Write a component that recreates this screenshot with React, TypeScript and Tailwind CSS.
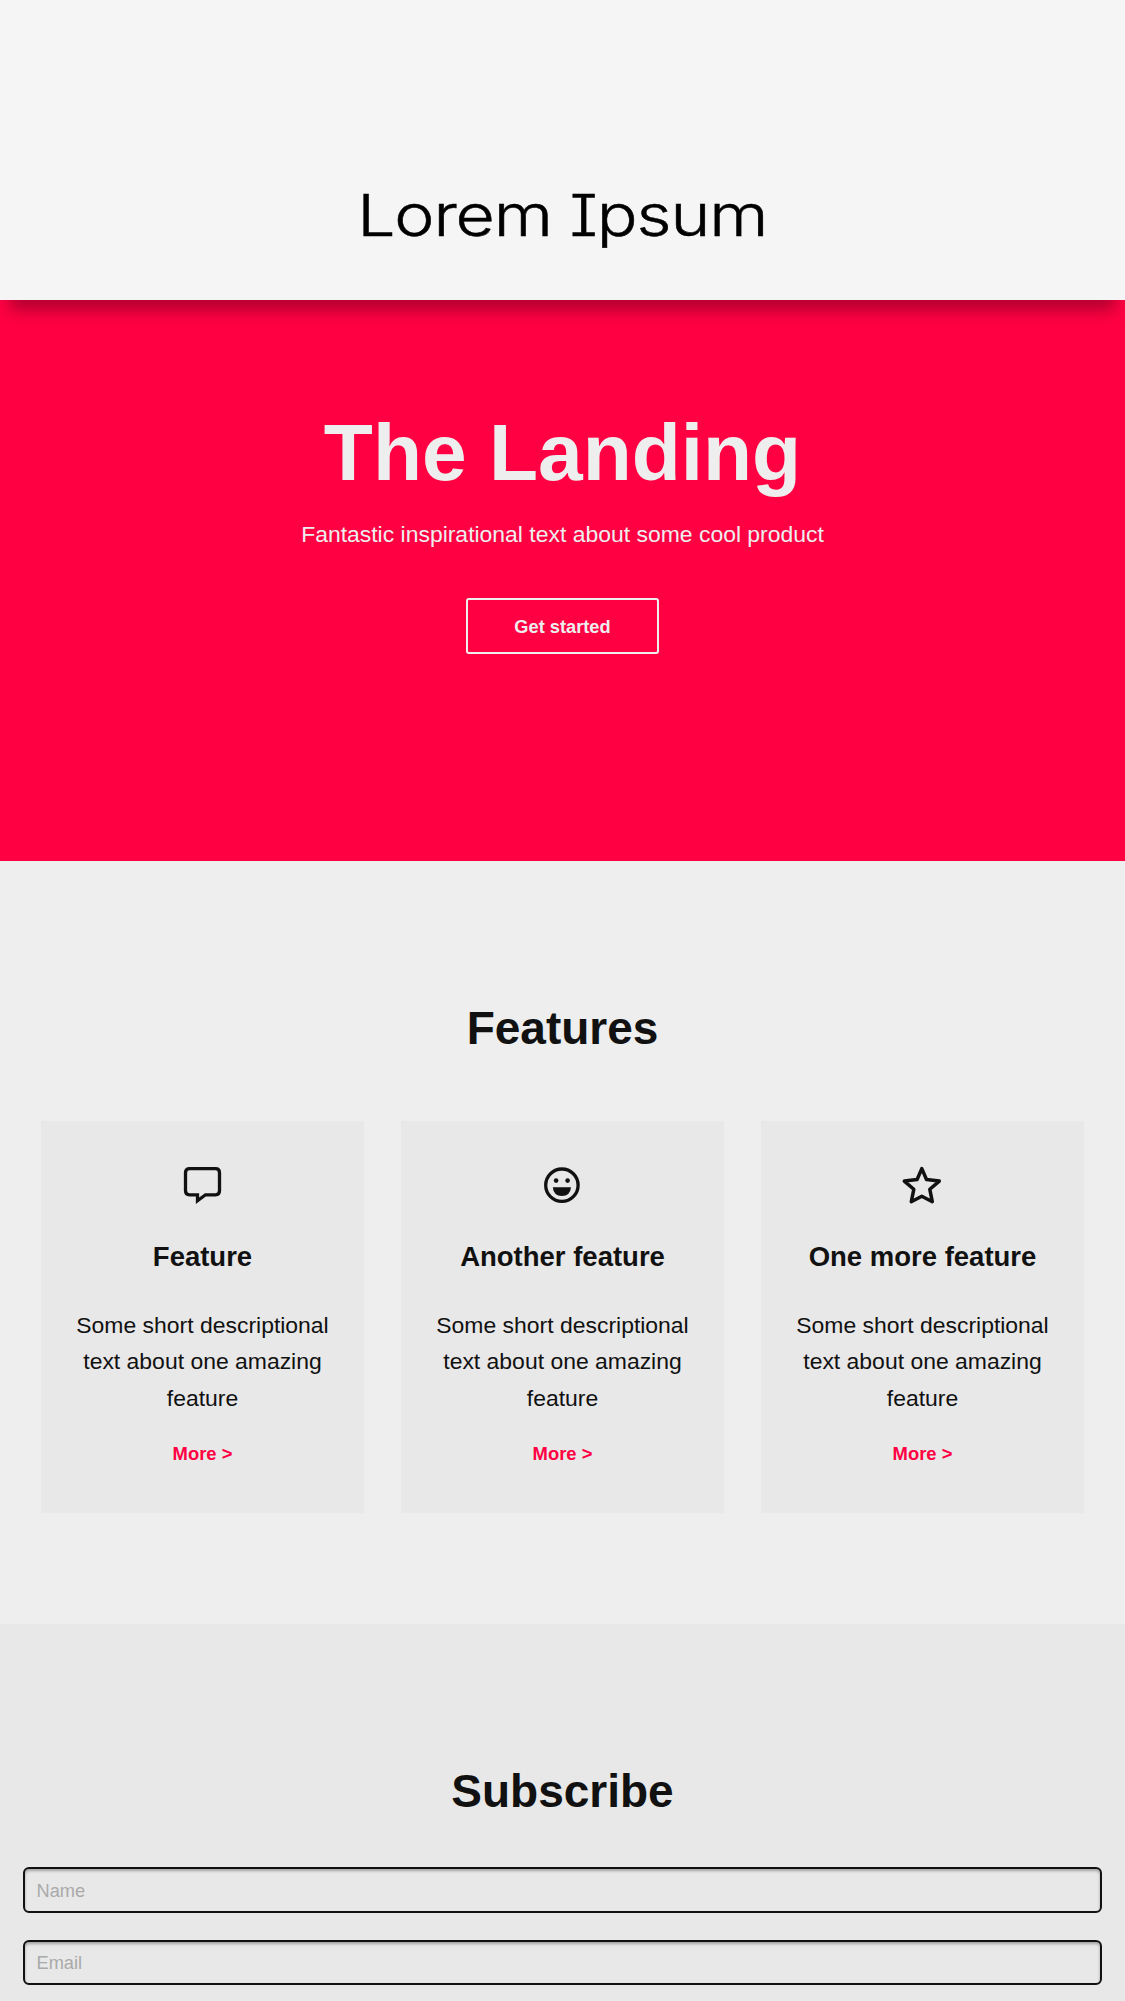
import type { ReactNode } from "react";

const CommentIcon = () => (
  <svg width="60" height="60" viewBox="3 0 60 60" fill="none" stroke="#111" strokeWidth="3.3">
    <path d="M18.5 13.7H45.5Q49.5 13.7 49.5 17.7V35.8Q49.5 39.8 45.5 39.8H35.5L27.5 45.8V39.8H19.5Q15.5 39.8 15.5 35.8V17.7Q15.5 13.7 19.5 13.7Z" />
  </svg>
);

const SmileIcon = () => (
  <svg width="60" height="60" viewBox="1 0 60 60" fill="#111">
    <circle cx="29.9" cy="30.2" r="16.2" fill="none" stroke="#111" strokeWidth="3.3" />
    <circle cx="24.1" cy="25.6" r="2.3" />
    <circle cx="35.6" cy="25.6" r="2.3" />
    <path d="M20.8 32.3H39Q38.3 41 29.9 41T20.8 32.3Z" />
  </svg>
);

const StarIcon = () => (
  <svg width="60" height="60" viewBox="1 0 60 60" fill="none" stroke="#111" strokeWidth="3.5" strokeLinejoin="round">
    <path d="M29.8 13.6L34.5 24.5L47.3 26.1L37.8 34.3L40.3 46.7L29.8 41.3L19.3 46.7L21.8 34.3L12.3 26.1L25.1 24.5Z" />
  </svg>
);

const features: { title: string; icon: ReactNode }[] = [
  { title: "Feature", icon: <CommentIcon /> },
  { title: "Another feature", icon: <SmileIcon /> },
  { title: "One more feature", icon: <StarIcon /> },
];

function FeatureCard({ title, icon }: { title: string; icon: ReactNode }) {
  return (
    <article className="flex h-[392px] flex-col items-center bg-[#e8e8e8] px-6 pt-[34px] text-center">
      {icon}
      <h3 className="mt-6 text-[27.5px] leading-9 font-bold whitespace-nowrap">{title}</h3>
      <p className="mt-[31.6px] text-[22.95px] leading-[36.48px]">
        Some short descriptional text about one amazing feature
      </p>
      <a href="#more" className="mt-[23px] text-[18.4px] leading-[29px] font-bold text-[#ff0043]">
        More &gt;
      </a>
    </article>
  );
}

const inputClass =
  "h-[45.5px] w-full rounded-[6px] border-2 border-[#111] bg-transparent px-[11.5px] pt-[2px] text-[18.24px] shadow-[inset_0_2px_3px_rgba(0,0,0,0.3)] outline-none placeholder:text-[#aaa]";

export default function App() {
  return (
    <div className="h-[2001px] overflow-hidden bg-[#eee] font-['Liberation_Sans',Arial,sans-serif] text-[#111]">
      <header className="relative z-10 flex h-[300px] items-end justify-center bg-[#f5f5f5] pb-[49px] shadow-[0_20px_15px_-10px_rgba(0,0,0,0.3)]">
        <h1 className="scale-x-[1.17] font-['Inter',sans-serif] text-[58px] leading-[72px] font-light tracking-[-1px] whitespace-nowrap text-black [-webkit-text-stroke:0.5px_black] [font-feature-settings:'cv08']">
          Lorem Ipsum
        </h1>
      </header>

      <section className="flex h-[560.5px] flex-col items-center bg-[#ff0043] pt-[112px] text-[#eee]">
        <h2 className="text-[80.3px] leading-[80px] font-bold">The Landing</h2>
        <p className="mt-6 text-[22.95px] leading-9">Fantastic inspirational text about some cool product</p>
        <button className="mt-[46px] h-[56px] w-[193px] rounded-[3px] border-2 border-[#eee] pt-px text-[18.24px] font-bold">
          Get started
        </button>
      </section>

      <section className="h-[763.5px] px-[41px] pt-[139.5px]">
        <h2 className="text-center text-[46px] leading-[56px] font-bold">Features</h2>
        <div className="mt-[65px] grid grid-cols-3 gap-[37px]">
          {features.map((f) => (
            <FeatureCard key={f.title} title={f.title} icon={f.icon} />
          ))}
        </div>
      </section>

      <section className="h-[377px] bg-[#e8e8e8] px-[23px] pt-[139px]">
        <h2 className="text-center text-[46px] leading-[56px] font-bold">Subscribe</h2>
        <form className="mt-12 flex flex-col gap-[27px]">
          <input className={inputClass} placeholder="Name" />
          <input className={inputClass} placeholder="Email" type="email" />
        </form>
      </section>
    </div>
  );
}
